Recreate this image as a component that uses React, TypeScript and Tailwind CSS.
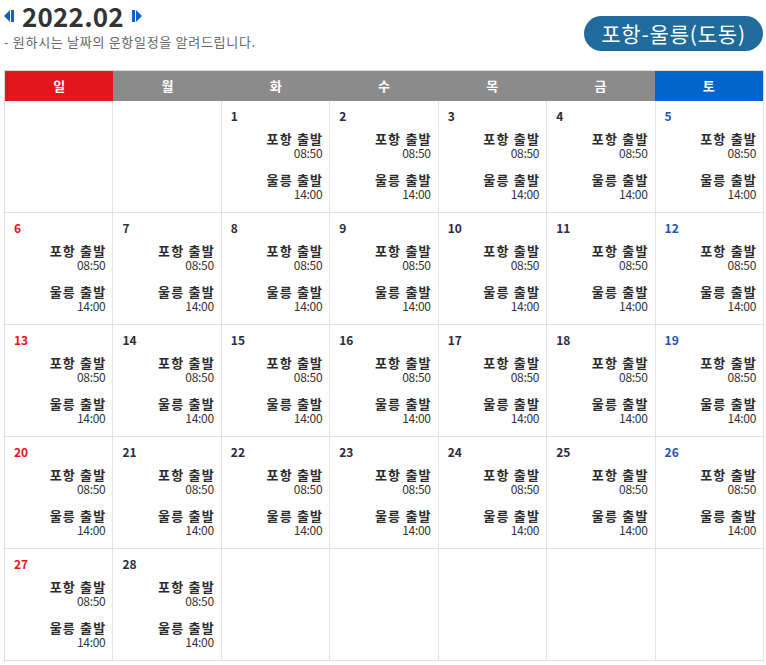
import React from 'react'

const FONT = '"Noto Sans CJK KR", "Noto Sans", sans-serif'

const weekDays = [
  { label: '일', bg: 'bg-[#e2161b]' },
  { label: '월', bg: 'bg-[#8b8b8b]' },
  { label: '화', bg: 'bg-[#8b8b8b]' },
  { label: '수', bg: 'bg-[#8b8b8b]' },
  { label: '목', bg: 'bg-[#8b8b8b]' },
  { label: '금', bg: 'bg-[#8b8b8b]' },
  { label: '토', bg: 'bg-[#0066cc]' },
]

// Feb 2022 starts on a Tuesday
const cells: (number | null)[] = [
  null,
  null,
  ...Array.from({ length: 28 }, (_, i) => i + 1),
  null,
  null,
  null,
  null,
  null,
]

function Arrow({ dir }: { dir: 'left' | 'right' }) {
  return (
    <svg width="10" height="14" viewBox="0 0 10 14" className="shrink-0">
      {dir === 'left' ? (
        <>
          <polygon points="6,1 6,13 0,7" fill="#0a62c9" />
          <rect x="7" y="1" width="3" height="12" fill="#0a62c9" />
        </>
      ) : (
        <>
          <rect x="0" y="1" width="3" height="12" fill="#0a62c9" />
          <polygon points="4,1 4,13 10,7" fill="#0a62c9" />
        </>
      )}
    </svg>
  )
}

function Trip({ title, time, first }: { title: string; time: string; first?: boolean }) {
  return (
    <div className={`flex flex-col items-end ${first ? 'mt-[9px]' : 'mt-[13px]'}`}>
      <div className="text-[13px] leading-[14px] font-bold text-[#2b2b2b] tracking-[1.2px] -mr-[1px]">{title}</div>
      <div className="text-[12px] leading-[14px] text-[#333] tracking-[-0.3px]">{time}</div>
    </div>
  )
}

function DayCell({ day, col }: { day: number | null; col: number }) {
  const numColor = col === 0 ? 'text-[#e8101b]' : col === 6 ? 'text-[#1d55b8]' : 'text-[#2b2b3b]'
  return (
    <div className="h-[112px] border-r border-b border-[#e2e2e2] pl-[9px] pr-[7px] pt-[8px]">
      {day !== null && (
        <>
          <div className={`text-[12px] leading-[14px] font-bold ${numColor}`}>{day}</div>
          <Trip title="포항 출발" time="08:50" first />
          <Trip title="울릉 출발" time="14:00" />
        </>
      )}
    </div>
  )
}

export default function App() {
  return (
    <main className="w-[766px] h-[665px] bg-white" style={{ fontFamily: FONT }}>
      {/* Header */}
      <div className="flex items-start justify-between pl-[4px] pr-[3px] h-[70px]">
        <div>
          <div className="flex items-center gap-[8px]">
            <Arrow dir="left" />
            <span className="text-[26px] leading-[32px] font-bold text-[#333] tracking-[0.2px]">2022.02</span>
            <Arrow dir="right" />
          </div>
          <p className="mt-[2px] text-[13px] leading-[16px] text-[#666] tracking-[0.7px]">
            - 원하시는 날짜의 운항일정을 알려드립니다.
          </p>
        </div>
        <div className="mt-[16px] h-[35px] w-[179px] rounded-full bg-[#1f6b9b] flex items-center justify-center text-white text-[21px] tracking-[0.8px]">
          포항-울릉(도동)
        </div>
      </div>

      {/* Calendar */}
      <div className="ml-[4px] w-[760px] border-l border-t border-[#dcdcdc]">
        <div className="grid grid-cols-7 border-r border-[#dcdcdc]">
          {weekDays.map((d) => (
            <div
              key={d.label}
              className={`${d.bg} h-[30px] flex items-center justify-center text-white text-[13px] font-bold`}
            >
              {d.label}
            </div>
          ))}
        </div>
        <div className="grid grid-cols-7">
          {cells.map((day, idx) => (
            <DayCell key={idx} day={day} col={idx % 7} />
          ))}
        </div>
      </div>
    </main>
  )
}
